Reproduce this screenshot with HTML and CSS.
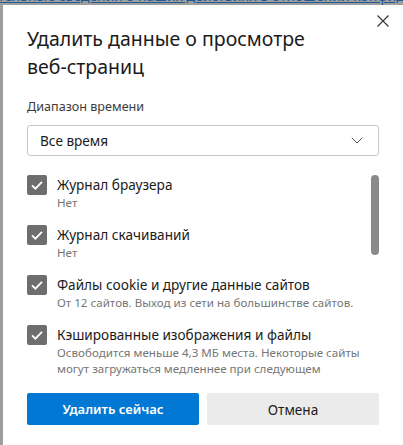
FILE: index.html
```html
<!DOCTYPE html>
<html lang="ru">
<head>
<meta charset="utf-8">
<link rel="stylesheet" href="styles.css">
</head>
<body>
<div class="page">
  <p class="page-link">тельные сведения о наших действиях в отношении конфиденциальности</p>
</div>
<div class="dialog">
  <button class="close" aria-label="Закрыть">
    <svg width="12" height="12" viewBox="0 0 12 12"><path d="M0.5 0.5L11.5 11.5M11.5 0.5L0.5 11.5" stroke="#333" stroke-width="1.1" fill="none"/></svg>
  </button>
  <h1 class="title">Удалить данные о просмотре веб-страниц</h1>
  <div class="range-label">Диапазон времени</div>
  <div class="select">
    <span>Все время</span>
    <svg width="12" height="7" viewBox="0 0 12 7"><path d="M0.8 0.8L6 6L11.2 0.8" stroke="#555" stroke-width="1" fill="none"/></svg>
  </div>
  <div class="body">
    <div class="list">
      <div class="item">
        <span class="cb"><svg width="20" height="20" viewBox="0 0 20 20"><path d="M5 10.3L8.4 13.7L15 6.8" stroke="#fff" stroke-width="1.8" fill="none"/></svg></span>
        <div class="text"><div class="lbl">Журнал браузера</div><div class="sub">Нет</div></div>
      </div>
      <div class="item">
        <span class="cb"><svg width="20" height="20" viewBox="0 0 20 20"><path d="M5 10.3L8.4 13.7L15 6.8" stroke="#fff" stroke-width="1.8" fill="none"/></svg></span>
        <div class="text"><div class="lbl">Журнал скачиваний</div><div class="sub">Нет</div></div>
      </div>
      <div class="item">
        <span class="cb"><svg width="20" height="20" viewBox="0 0 20 20"><path d="M5 10.3L8.4 13.7L15 6.8" stroke="#fff" stroke-width="1.8" fill="none"/></svg></span>
        <div class="text"><div class="lbl">Файлы cookie и другие данные сайтов</div><div class="sub">От 12 сайтов. Выход из сети на большинстве сайтов.</div></div>
      </div>
      <div class="item">
        <span class="cb"><svg width="20" height="20" viewBox="0 0 20 20"><path d="M5 10.3L8.4 13.7L15 6.8" stroke="#fff" stroke-width="1.8" fill="none"/></svg></span>
        <div class="text"><div class="lbl">Кэшированные изображения и файлы</div><div class="sub">Освободится меньше 4,3 МБ места. Некоторые сайты могут загружаться медленнее при следующем</div></div>
      </div>
    </div>
    <div class="scrollbar"><div class="thumb"></div></div>
  </div>
  <div class="buttons">
    <button class="btn primary">Удалить сейчас</button>
    <button class="btn secondary">Отмена</button>
  </div>
</div>
</body>
</html>
```
FILE: styles.css
```css
* { box-sizing: border-box; }
html, body { margin: 0; padding: 0; }
body {
  width: 403px;
  height: 445px;
  overflow: hidden;
  background: #9e9e9e;
  position: relative;
  font-family: "Noto Sans", sans-serif;
}
.page { padding: 0; }
.page-link {
  margin: -12px 0 0 -2px;
  font-size: 14px;
  line-height: 16px;
  color: #1f5a94;
  text-decoration: underline;
  white-space: nowrap;
}
.dialog {
  position: absolute;
  left: 3px;
  top: 5px;
  width: 400px;
  height: 440px;
  background: #fff;
  padding: 20px 24px 0 24px;
  display: flex;
  flex-direction: column;
}
.close {
  position: absolute;
  top: 10px;
  right: 14px;
  width: 12px;
  height: 12px;
  padding: 0;
  border: 0;
  background: none;
  display: flex;
}
.title {
  margin: 0 0 17px 0;
  font-size: 19.5px;
  font-weight: 400;
  line-height: 28px;
  color: #1b1b1b;
  width: 300px;
}
.range-label {
  font-size: 12.6px;
  line-height: 18px;
  color: #3b3b3b;
  margin-bottom: 9px;
}
.select {
  height: 31px;
  border: 1px solid #c8c8c8;
  border-radius: 3px;
  display: flex;
  align-items: center;
  justify-content: space-between;
  padding: 0 15px 0 12px;
  font-size: 13.6px;
  line-height: 20px;
  color: #1b1b1b;
  margin-bottom: 19px;
}
.body {
  display: flex;
  height: 201px;
}
.list {
  flex: 1;
  overflow: hidden;
  display: flex;
  flex-direction: column;
  gap: 14px;
}
.item {
  display: flex;
  gap: 10px;
  align-items: flex-start;
}
.cb {
  flex: none;
  width: 20px;
  height: 20px;
  border-radius: 2px;
  background: #6e6e6e;
  display: flex;
}
.lbl {
  font-size: 13.6px;
  line-height: 20px;
  color: #1b1b1b;
}
.sub {
  font-size: 11.6px;
  line-height: 16px;
  color: #767676;
}
.scrollbar {
  flex: none;
  width: 8px;
}
.thumb {
  height: 80px;
  border-radius: 4px;
  background: #8a8a8a;
}
.buttons {
  margin-top: 17px;
  display: flex;
  gap: 8px;
}
.btn {
  flex: 1;
  height: 32px;
  border: 0;
  border-radius: 2px;
  font-family: inherit;
  font-size: 13.6px;
}
.primary {
  background: #0078d4;
  color: #fff;
  font-weight: 600;
  font-size: 13px;
}
.secondary {
  background: #ebebeb;
  color: #1b1b1b;
}
```
